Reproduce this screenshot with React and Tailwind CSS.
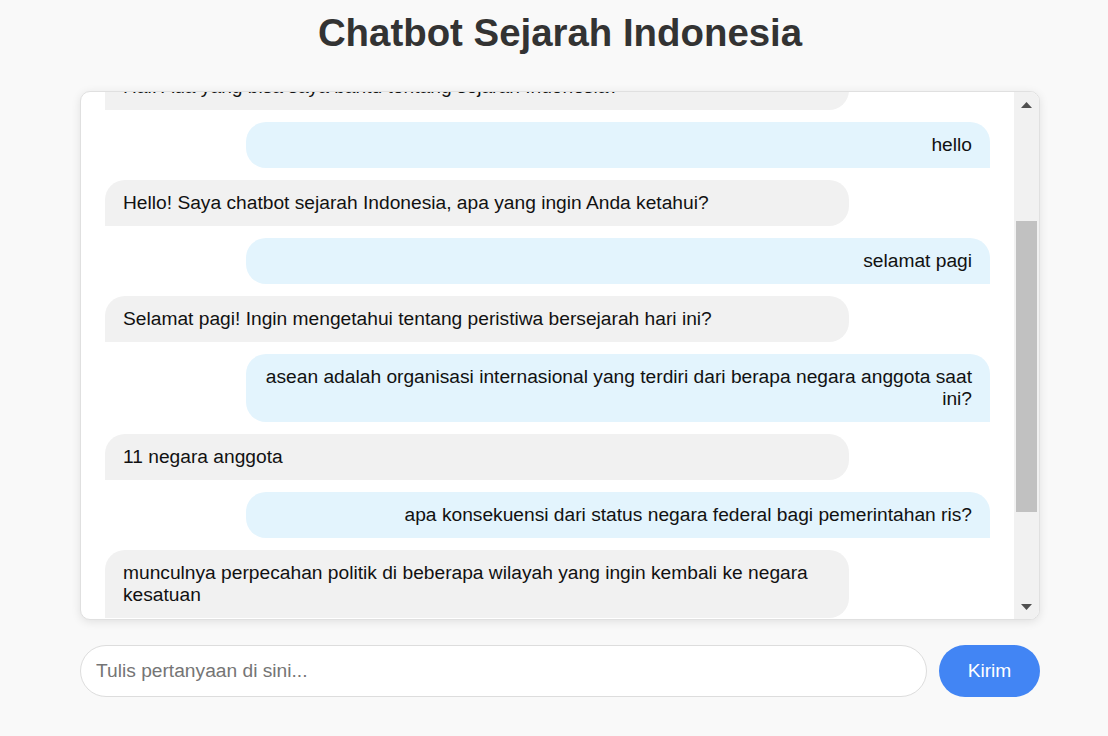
import React from "react";

const messages = [
  { from: "bot", text: "Hai! Ada yang bisa saya bantu tentang sejarah Indonesia?" },
  { from: "user", text: "hello" },
  { from: "bot", text: "Hello! Saya chatbot sejarah Indonesia, apa yang ingin Anda ketahui?" },
  { from: "user", text: "selamat pagi" },
  { from: "bot", text: "Selamat pagi! Ingin mengetahui tentang peristiwa bersejarah hari ini?" },
  { from: "user", text: "asean adalah organisasi internasional yang terdiri dari berapa negara anggota saat ini?" },
  { from: "bot", text: "11 negara anggota" },
  { from: "user", text: "apa konsekuensi dari status negara federal bagi pemerintahan ris?" },
  { from: "bot", text: "munculnya perpecahan politik di beberapa wilayah yang ingin kembali ke negara kesatuan" },
];

function Bubble({ from, text }) {
  if (from === "user") {
    return (
      <div className="shrink-0 self-end w-[744px] px-[18px] py-3 leading-[22px] text-right bg-[#e3f4fd] text-[#111] rounded-[20px] rounded-br-none">
        {text}
      </div>
    );
  }
  return (
    <div className="shrink-0 self-start w-[744px] px-[18px] py-3 leading-[22px] bg-[#f1f1f1] text-[#111] rounded-[20px] rounded-bl-none">
      {text}
    </div>
  );
}

function FakeScrollbar() {
  return (
    <div className="w-[25px] shrink-0 flex flex-col bg-[#f1f1f1]">
      <div className="h-[25px] flex items-center justify-center">
        <svg width="11" height="6" viewBox="0 0 11 6">
          <polygon points="5.5,0 11,6 0,6" fill="#505050" />
        </svg>
      </div>
      <div className="flex-1 flex flex-col">
        <div className="mt-[104px] h-[291px] mx-[2px] bg-[#c1c1c1]" />
      </div>
      <div className="h-[25px] flex items-center justify-center">
        <svg width="11" height="6" viewBox="0 0 11 6">
          <polygon points="0,0 11,0 5.5,6" fill="#505050" />
        </svg>
      </div>
    </div>
  );
}

export default function App() {
  return (
    <div className="min-h-screen bg-[#f9f9f9] font-['Liberation_Sans',Arial,sans-serif] text-[19.2px]">
      <div className="w-[960px] ml-[80px] pt-[11px] flex flex-col">
        <h1 className="text-center text-[38.4px] leading-[44px] font-bold text-[#333]">
          Chatbot Sejarah Indonesia
        </h1>
        <div className="mt-[36px] h-[529px] flex bg-white border border-[#e0e0e0] rounded-[10px] shadow-[0_2px_10px_rgba(0,0,0,0.1)] overflow-hidden">
          <div className="flex-1 overflow-hidden flex flex-col justify-end gap-3 px-[24px] pb-[1px]">
            {messages.map((m, i) => (
              <Bubble key={i} from={m.from} text={m.text} />
            ))}
          </div>
          <FakeScrollbar />
        </div>
        <div className="mt-[25px] flex gap-3 h-[52px]">
          <input
            type="text"
            placeholder="Tulis pertanyaan di sini..."
            className="flex-1 min-w-0 h-full rounded-full border border-[#ddd] bg-white px-[15px] text-[19.2px] text-[#111] placeholder:text-[#757575] outline-none"
          />
          <button className="w-[101px] h-full rounded-full bg-[#4285f4] text-white text-[19.2px]">
            Kirim
          </button>
        </div>
      </div>
    </div>
  );
}
